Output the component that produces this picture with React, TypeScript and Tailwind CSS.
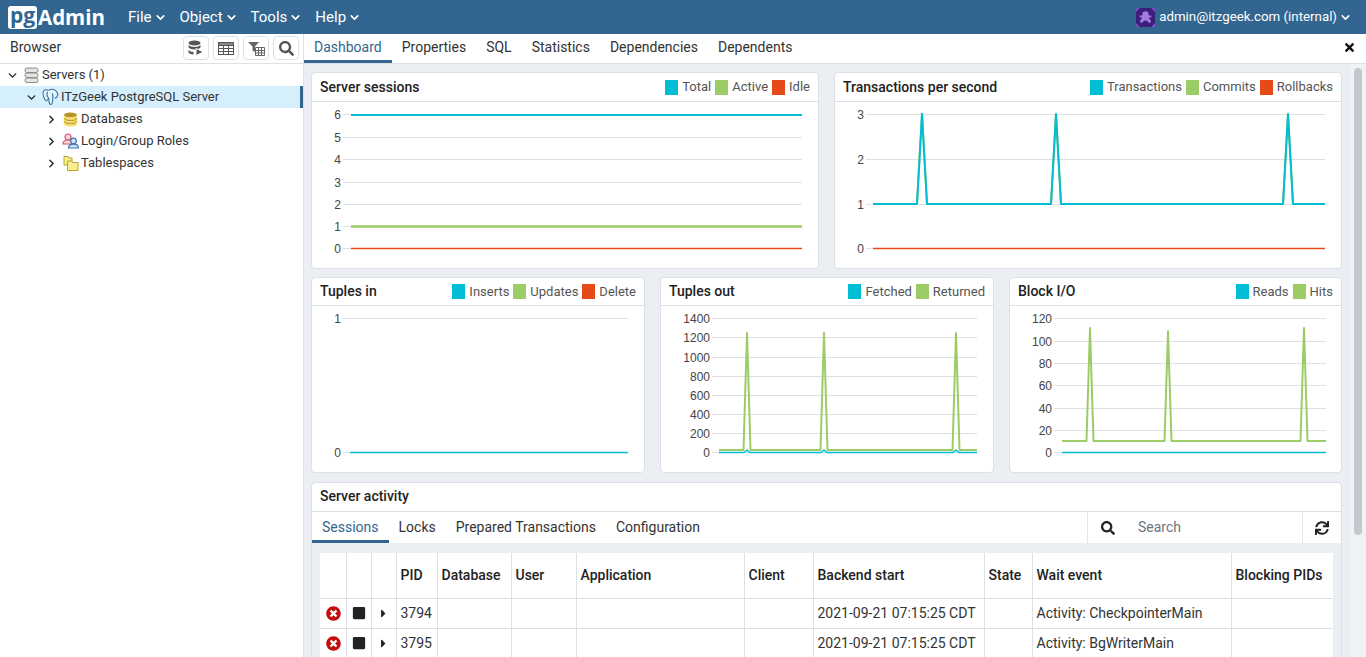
import React from 'react';
import { ChevronDown, ChevronRight } from 'lucide-react';
import { FaCaretRight, FaSearch, FaStop, FaSync, FaTimes, FaTimesCircle } from 'react-icons/fa';

const TEAL = '#00BCD4';
const GREEN = '#9CCC65';
const ORANGE = '#E64A19';

type Line = { color: string; points: string; width?: number };
type ChartProps = {
  box: [number, number, number, number];
  ticks: [string, number][];
  labelX: number;
  gridFrom: number;
  gridTo: number;
  lines: Line[];
};

// flat line with a spike at each x
const spikes = (from: number, to: number, base: number, peaks: [number, number][], half = 5) => {
  const pts = [`${from},${base}`];
  peaks.forEach(([x, y]) => pts.push(`${x - half},${base}`, `${x},${y}`, `${x + half},${base}`));
  pts.push(`${to},${base}`);
  return pts.join(' ');
};

const Chart = ({ box, ticks, labelX, gridFrom, gridTo, lines }: ChartProps) => (
  <svg width={box[2]} height={box[3]} viewBox={box.join(' ')} className="block">
    {ticks.map(([label, y]) => (
      <g key={label}>
        <line x1={gridFrom} x2={gridTo} y1={y + 0.5} y2={y + 0.5} stroke="#dcdfe3" />
        <text x={labelX} y={y + 4.5} textAnchor="end" fontSize="12" fill="#444" className="font-['Liberation_Sans',sans-serif]">
          {label}
        </text>
      </g>
    ))}
    {lines.map((l, i) => (
      <polyline key={i} points={l.points} fill="none" stroke={l.color} strokeWidth={l.width ?? 2} strokeLinejoin="round" />
    ))}
  </svg>
);

const Card = ({ title, legend, head = 'h-[29px]', children }: { title: string; legend: [string, string][]; head?: string; children: React.ReactNode }) => (
  <div className="bg-white rounded border border-[#dde0e6] overflow-hidden">
    <div className={`${head} flex items-center justify-between pl-2 pr-2 border-b border-[#dde0e6]`}>
      <span className="font-medium text-[14px] text-[#222]">{title}</span>
      <div className="flex items-center text-[13px] text-[#555]">
        {legend.map(([name, color]) => (
          <React.Fragment key={name}>
            <span className="w-[13px] h-[15px] ml-[4px] mr-[4px]" style={{ background: color }} />
            <span>{name}</span>
          </React.Fragment>
        ))}
      </div>
    </div>
    {children}
  </div>
);

const ServersIcon = () => (
  <svg width="15" height="16" viewBox="0 0 15 16">
    {[1, 6, 11].map(y => (
      <rect key={y} x="1" y={y} width="13" height="4.5" rx="2" fill="#e4e4e4" stroke="#8a8a8a" />
    ))}
  </svg>
);

const ElephantIcon = () => (
  <svg width="17" height="18" viewBox="0 0 18 18" fill="none" stroke="#2f6a96" strokeWidth="1.1">
    <path d="M7 2C4.500.8 2.500 1 1.500 3c-1 2.500.5 7 1.800 9 .8 1.300 1.700 1.200 2.400.2l1-1.400" fill="#e6f5fc" />
    <path d="M7 2c2-1.300 5-1.300 7 0 2.500 1.700 3 4.500 2 6.500-.6 1.200-1.500 1.500-2.500 1.800" fill="#e6f5fc" />
    <path d="M11 5c1 3 .5 5 .3 7.500-.2 2.500-.8 4.500-2 4.500-1.500 0-1.800-1.500-1.800-3.500 0-1.500 0-3-1-4-1.500-1.500-1.500-4-.5-6" fill="#e6f5fc" />
  </svg>
);

const DatabasesIcon = () => (
  <svg width="15" height="15" viewBox="0 0 15 15">
    <ellipse cx="7.5" cy="3" rx="6.500" ry="2.500" fill="#b5952a" />
    <path d="M1 3v9c0 1.400 2.900 2.500 6.500 2.500S14 13.400 14 12V3c0 1.400-2.900 2.500-6.500 2.500S1 4.400 1 3z" fill="#f3dc6d" />
    <path d="M1 6c0 1.400 2.900 2.500 6.500 2.500S14 7.400 14 6M1 9c0 1.400 2.900 2.500 6.500 2.500S14 10.400 14 9" fill="none" stroke="#b5952a" />
  </svg>
);

const RolesIcon = () => (
  <svg width="18" height="16" viewBox="0 0 18 16" strokeWidth="1.200">
    <circle cx="6" cy="4" r="3" fill="#f8d7da" stroke="#d9536f" />
    <path d="M1 11c0-2.500 2-4 5-4s5 1.500 5 4z" fill="#f8d7da" stroke="#d9536f" />
    <circle cx="11.500" cy="8" r="2.800" fill="#cfe2f7" stroke="#3f74b5" />
    <path d="M6.500 15c0-2.500 2-3.800 5-3.800s5 1.300 5 3.800z" fill="#cfe2f7" stroke="#3f74b5" />
  </svg>
);

const TablespacesIcon = () => (
  <svg width="16" height="16" viewBox="0 0 16 16">
    <path d="M1 1.500h4l1 1.500h3v7H1z" fill="#f7ec8e" stroke="#b9a52e" />
    <path d="M4.500 6h4l1 1.500h5.500v8H4.500z" fill="#f7ec8e" stroke="#b9a52e" />
  </svg>
);

const QueryToolIcon = () => (
  <svg width="16" height="16" viewBox="0 0 16 16" fill="#555">
    <ellipse cx="6.500" cy="3" rx="6" ry="2.500" />
    <path d="M.5 5c1 1.300 3.500 2 6 2s5-.7 6-2v2.500c-1 1.300-3.500 2-6 2s-5-.7-6-2z" />
    <path d="M.5 10c1 1.300 3 2 5 2v2.500c-2.500 0-4-1-5-2z" />
    <path d="M8 8.500l7.500 3.500L8 15.500z" fill="#555" stroke="#fff" />
  </svg>
);

const TableIcon = () => (
  <svg width="16" height="13" viewBox="0 0 16 13" fill="none" stroke="#555">
    <rect x=".5" y=".5" width="15" height="12" fill="#fff" />
    <rect x=".5" y=".5" width="15" height="3" fill="#888" />
    <path d="M.5 6.500h15M.5 9.500h15M5.500 3.500v9M10.500 3.500v9" />
  </svg>
);

const FilterTableIcon = () => (
  <svg width="17" height="15" viewBox="0 0 17 15">
    <path d="M0 1h11L7 5.500V11L4.500 9.500V5.500z" fill="#666" />
    <path d="M7.500 6.500h9v8h-9zM7.500 9.500h9M7.500 12h9M10.500 6.500v8M13.500 6.500v8" fill="#fff" stroke="#666" />
  </svg>
);

const Avatar = () => (
  <svg width="19" height="19" viewBox="0 0 18 18" className="mr-[4px]">
    <rect width="18" height="18" fill="#3a1f7a" />
    <path d="M9 3a3 3 0 0 1 3 3v1h2.500v2H12l2 3v2h-2l-1.500-2h-3L6 14H4v-2l2-3H3.500V7H6V6a3 3 0 0 1 3-3z" fill="#a67be0" />
    <path d="M0 0h3v1.500H1.500V3H0zM18 0h-3v1.500h1.500V3H18zM0 18h3v-1.500H1.500V15H0zM18 18h-3v-1.500h1.500V15H18z" fill="#7a52c7" />
  </svg>
);

const TreeRow = ({ indent, open, selected, icon, label }: { indent: string; open?: boolean; selected?: boolean; icon: React.ReactNode; label: string }) => (
  <div className={`h-[22px] flex items-center ${indent} ${selected ? 'bg-[#d6effc] border-r-[3px] border-[#326690]' : ''}`}>
    {open
      ? <ChevronDown size={13} strokeWidth={2.5} className="text-[#222] shrink-0" />
      : <ChevronRight size={13} strokeWidth={2.5} className="text-[#222] shrink-0" />}
    <span className="ml-[5px] mr-[3px] flex items-center justify-center w-[15px] [&>svg]:shrink-0">{icon}</span>
    <span className="text-[13px] text-[#333] whitespace-nowrap">{label}</span>
  </div>
);

const ToolButton = ({ children }: { children: React.ReactNode }) => (
  <div className="w-[26px] h-[24px] flex items-center justify-center rounded border border-[#dde0e6] bg-white text-[#555]">
    {children}
  </div>
);

const NavMenu = ({ label }: { label: string }) => (
  <div className="flex items-center text-[15px] text-white">
    {label}
    <ChevronDown size={13} strokeWidth={3} className="ml-[2px]" />
  </div>
);

const TabBar = ({ tabs, pad = '' }: { tabs: string[]; pad?: string }) => (
  <div className="flex">
    {tabs.map((t, i) => (
      <div key={t} className={`px-[10px] h-full flex items-center text-[14px] border-b-[3px] ${pad} ${i === 0 ? 'text-[#326690] border-[#326690]' : 'text-[#333] border-transparent'}`}>
        {t}
      </div>
    ))}
  </div>
);

const COLS = [26, 25, 25, 41, 74, 65, 168, 69, 171, 48, 199, 102];
const HEAD = ['', '', '', 'PID', 'Database', 'User', 'Application', 'Client', 'Backend start', 'State', 'Wait event', 'Blocking PIDs'];
const ROWS = [
  { pid: '3794', start: '2021-09-21 07:15:25 CDT', wait: 'Activity: CheckpointerMain' },
  { pid: '3795', start: '2021-09-21 07:15:25 CDT', wait: 'Activity: BgWriterMain' },
];

export default function App() {
  return (
    <div className="h-screen overflow-hidden flex flex-col bg-white font-['Roboto',sans-serif] text-[#222]">
      {/* Top nav */}
      <nav className="h-[34px] shrink-0 bg-[#326690] flex items-center pl-[8px] pr-[14px]">
        <div className="flex items-center w-[120px]">
          <span className="h-[23px] w-[29px] bg-white rounded-[3px] flex items-center justify-center text-[#326690] font-bold text-[21px] leading-none pb-[4px] font-['Open_Sans',sans-serif]">pg</span>
          <span className="ml-[1px] text-white font-bold text-[20.5px] leading-none font-['Open_Sans',sans-serif]">Admin</span>
        </div>
        <div className="flex gap-[13px]">
          {['File', 'Object', 'Tools', 'Help'].map(m => <NavMenu key={m} label={m} />)}
        </div>
        <div className="ml-auto flex items-center text-[13.3px] text-white">
          <Avatar />
          admin@itzgeek.com (internal)
          <ChevronDown size={13} strokeWidth={3} className="ml-[2px]" />
        </div>
      </nav>

      <div className="flex flex-1 min-h-0">
        {/* Browser tree */}
        <aside className="w-[304px] shrink-0 border-r border-[#dde0e6] flex flex-col">
          <div className="h-[30px] shrink-0 flex items-center pl-[10px] pr-[4px] pb-[1px] border-b border-[#dde0e6]">
            <span className="text-[14px] text-[#333] pb-[1px]">Browser</span>
            <div className="ml-auto flex gap-[4px]">
              <ToolButton><QueryToolIcon /></ToolButton>
              <ToolButton><TableIcon /></ToolButton>
              <ToolButton><FilterTableIcon /></ToolButton>
              <ToolButton><FaSearch size={15} /></ToolButton>
            </div>
          </div>
          <TreeRow indent="pl-[6px]" open icon={<ServersIcon />} label="Servers (1)" />
          <TreeRow indent="pl-[25px]" open selected icon={<ElephantIcon />} label="ITzGeek PostgreSQL Server" />
          <TreeRow indent="pl-[45px]" icon={<DatabasesIcon />} label="Databases" />
          <TreeRow indent="pl-[45px]" icon={<RolesIcon />} label="Login/Group Roles" />
          <TreeRow indent="pl-[45px]" icon={<TablespacesIcon />} label="Tablespaces" />
        </aside>

        <main className="flex-1 min-w-0 flex flex-col">
          {/* Main tabs */}
          <div className="h-[30px] shrink-0 flex items-stretch justify-between border-b border-[#dde0e6]">
            <TabBar tabs={['Dashboard', 'Properties', 'SQL', 'Statistics', 'Dependencies', 'Dependents']} />
            <div className="flex items-center pr-[10px] pb-[2px]"><FaTimes size={13} className="text-[#111]" /></div>
          </div>

          <div className="flex-1 min-h-0 flex bg-[#ebeef3] overflow-hidden">
            <div className="w-[1047px] shrink-0 pl-[7px] pt-[8px] pr-[9px] flex flex-col gap-[8px]">
              <div className="grid grid-cols-2 gap-[15px]">
                <Card title="Server sessions" legend={[['Total', TEAL], ['Active', GREEN], ['Idle', ORANGE]]}>
                  <Chart
                    box={[312, 102, 506, 166]}
                    labelX={341}
                    gridFrom={343}
                    gridTo={802}
                    ticks={[['6', 114], ['5', 137], ['4', 159], ['3', 182], ['2', 204], ['1', 226], ['0', 248]]}
                    lines={[
                      { color: TEAL, points: '351,115 802,115' },
                      { color: ORANGE, points: '351,248.500 802,248.500', width: 1.500 },
                      { color: GREEN, points: '351,226.500 802,226.500', width: 2.500 },
                    ]}
                  />
                </Card>
                <Card title="Transactions per second" legend={[['Transactions', TEAL], ['Commits', GREEN], ['Rollbacks', ORANGE]]}>
                  <Chart
                    box={[835, 102, 506, 166]}
                    labelX={864}
                    gridFrom={866}
                    gridTo={1325}
                    ticks={[['3', 114], ['2', 159], ['1', 204], ['0', 248]]}
                    lines={[
                      { color: GREEN, points: spikes(873, 1325, 204, [[922, 114], [1056, 114], [1288, 114]]) },
                      { color: TEAL, points: spikes(873, 1325, 204, [[922, 114], [1056, 114], [1288, 114]]) },
                      { color: ORANGE, points: '873,248.500 1325,248.500', width: 1.500 },
                    ]}
                  />
                </Card>
              </div>

              <div className="grid grid-cols-[334px_334px_333px] gap-[15px]">
                <Card title="Tuples in" head="h-[28px]" legend={[['Inserts', TEAL], ['Updates', GREEN], ['Delete', ORANGE]]}>
                  <Chart
                    box={[312, 306, 332, 166]}
                    labelX={341}
                    gridFrom={343}
                    gridTo={628}
                    ticks={[['1', 318], ['0', 452]]}
                    lines={[{ color: TEAL, points: '350,452.500 628,452.500', width: 1.500 }]}
                  />
                </Card>
                <Card title="Tuples out" head="h-[28px]" legend={[['Fetched', TEAL], ['Returned', GREEN]]}>
                  <Chart
                    box={[661, 306, 332, 166]}
                    labelX={710}
                    gridFrom={712}
                    gridTo={977}
                    ticks={[['1400', 318], ['1200', 337], ['1000', 357], ['800', 376], ['600', 395], ['400', 414], ['200', 433], ['0', 452]]}
                    lines={[
                      { color: TEAL, points: spikes(719, 977, 452.500, [[747, 450], [824, 450], [956, 450]], 3), width: 1.500 },
                      { color: GREEN, points: spikes(719, 977, 450, [[747, 333], [824, 333], [956, 333]], 3.500) },
                    ]}
                  />
                </Card>
                <Card title="Block I/O" head="h-[28px]" legend={[['Reads', TEAL], ['Hits', GREEN]]}>
                  <Chart
                    box={[1010, 306, 331, 166]}
                    labelX={1052}
                    gridFrom={1054}
                    gridTo={1326}
                    ticks={[['120', 318], ['100', 341], ['80', 363], ['60', 385], ['40', 408], ['20', 430], ['0', 452]]}
                    lines={[
                      { color: TEAL, points: '1062,452.500 1326,452.500', width: 1.500 },
                      { color: GREEN, points: spikes(1062, 1326, 441, [[1090, 328], [1168, 331], [1304, 328]], 3.500) },
                    ]}
                  />
                </Card>
              </div>

              {/* Server activity */}
              <div className="mt-[1px] bg-white rounded-t border border-[#dde0e6] flex-1 flex flex-col">
                <div className="h-[29px] shrink-0 flex items-center pl-2 pb-[2px] font-medium text-[14px] border-b border-[#dde0e6]">Server activity</div>
                <div className="h-[31px] shrink-0 flex items-stretch justify-between">
                  <TabBar tabs={['Sessions', 'Locks', 'Prepared Transactions', 'Configuration']} pad="pt-[2px]" />
                  <div className="flex items-stretch border-l border-[#e4e6ea]">
                    <div className="w-[214px] flex items-center pl-[13px]">
                      <FaSearch size={14} className="text-[#222]" />
                      <span className="ml-[23px] text-[14px] text-[#6b7480]">Search</span>
                    </div>
                    <div className="w-[39px] border-l border-[#e4e6ea] flex items-center justify-center">
                      <FaSync size={14} className="text-[#222]" />
                    </div>
                  </div>
                </div>
                <div className="flex-1 bg-[#ebeef3] pt-[10px] pl-[8px] pr-[8px]">
                  <table className="table-fixed border-collapse bg-white w-[1013px] text-[14px]">
                    <colgroup>
                      {COLS.map((w, i) => <col key={i} style={{ width: w }} />)}
                    </colgroup>
                    <thead>
                      <tr className="h-[45px]">
                        {HEAD.map((h, i) => (
                          <th key={i} className="border border-[#dde0e6] border-t-0 first:border-l-0 last:border-r-0 font-medium text-left pl-[4px] whitespace-nowrap">{h}</th>
                        ))}
                      </tr>
                    </thead>
                    <tbody>
                      {ROWS.map(r => (
                        <tr key={r.pid} className="h-[30px] text-[#333]">
                          <td className="border border-[#dde0e6] border-l-0 pl-[1px]"><FaTimesCircle size={15} className="text-[#c40d0d] mx-auto" /></td>
                          <td className="border border-[#dde0e6]"><FaStop size={14} className="text-[#222] mx-auto" /></td>
                          <td className="border border-[#dde0e6]"><FaCaretRight size={13} className="text-[#222] mx-auto" /></td>
                          <td className="border border-[#dde0e6] pl-[4px]">{r.pid}</td>
                          <td className="border border-[#dde0e6]" />
                          <td className="border border-[#dde0e6]" />
                          <td className="border border-[#dde0e6]" />
                          <td className="border border-[#dde0e6]" />
                          <td className="border border-[#dde0e6] pl-[4px] whitespace-nowrap">{r.start}</td>
                          <td className="border border-[#dde0e6]" />
                          <td className="border border-[#dde0e6] pl-[4px] whitespace-nowrap">{r.wait}</td>
                          <td className="border border-[#dde0e6] border-r-0" />
                        </tr>
                      ))}
                    </tbody>
                  </table>
                </div>
              </div>
            </div>

            {/* Scrollbar */}
            <div className="flex-1 bg-[#f1f2f5] pt-[4px] pl-[3px] pr-[4px]">
              <div className="h-[467px] rounded-full bg-[#c4c7cd]" />
            </div>
          </div>
        </main>
      </div>
    </div>
  );
}
